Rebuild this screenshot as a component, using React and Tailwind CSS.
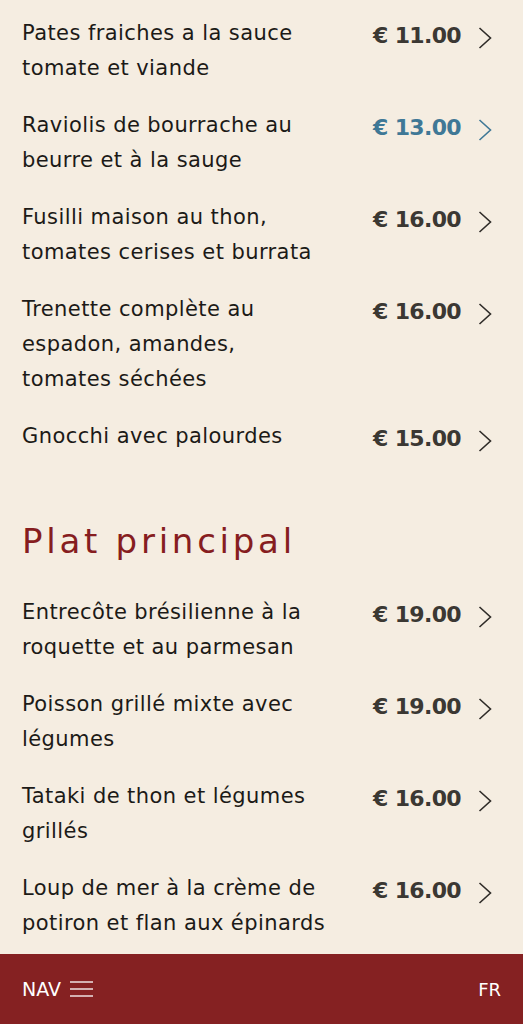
const pasta = [
  { lines: ['Pates fraiches a la sauce', 'tomate et viande'], price: '11.00' },
  { lines: ['Raviolis de bourrache au', 'beurre et à la sauge'], price: '13.00', active: true },
  { lines: ['Fusilli maison au thon,', 'tomates cerises et burrata'], price: '16.00' },
  { lines: ['Trenette complète au', 'espadon, amandes,', 'tomates séchées'], price: '16.00' },
  { lines: ['Gnocchi avec palourdes'], price: '15.00' },
];

const mains = [
  { lines: ['Entrecôte brésilienne à la', 'roquette et au parmesan'], price: '19.00' },
  { lines: ['Poisson grillé mixte avec', 'légumes'], price: '19.00' },
  { lines: ['Tataki de thon et légumes', 'grillés'], price: '16.00' },
  { lines: ['Loup de mer à la crème de', 'potiron et flan aux épinards'], price: '16.00' },
];

const Chevron = ({ className }) => (
  <svg className={className} width="14" height="22" viewBox="0 0 14 22" fill="none" stroke="currentColor" strokeWidth="1.6">
    <polyline points="1.5,1 12.5,11 1.5,21" />
  </svg>
);

const MenuItem = ({ lines, price, active }) => (
  <div className="flex items-start py-[11px]">
    <p className="flex-1 text-[21px] leading-[35px] tracking-[0.02em] text-[#1c1a17]">
      {lines.map((l, i) => (
        <span key={i} className="block whitespace-nowrap">{l}</span>
      ))}
    </p>
    <span className={`mt-[2px] whitespace-nowrap text-[22px] leading-[35px] font-bold tracking-[-0.03em] ${active ? 'text-[#3f7896]' : 'text-[#3b3833]'}`}>
      € {price}
    </span>
    <Chevron className={`ml-[17px] mt-[11px] shrink-0 ${active ? 'text-[#3f7896]' : 'text-[#2f2c28]'}`} />
  </div>
);

export default function App() {
  return (
    <div className="relative min-h-[1024px] bg-[#f5ede1] font-['DejaVu_Sans',sans-serif]">
      <div className="pl-[22px] pr-[31px] pb-[90px]">
        <div className="pt-[5px]">
          {pasta.map((item, i) => <MenuItem key={i} {...item} />)}
        </div>
        <h2 className="mt-[52px] mb-[21px] text-[34px] leading-[44px] tracking-[0.11em] text-[#861d20]">
          Plat principal
        </h2>
        <div>
          {mains.map((item, i) => <MenuItem key={i} {...item} />)}
        </div>
      </div>
      <nav className="fixed bottom-0 left-0 right-0 flex h-[70px] items-center justify-between bg-[#852122] px-[22px] text-white">
        <button className="flex items-center gap-[9px] text-[19px]">
          NAV
          <svg width="23" height="18" viewBox="0 0 23 18" fill="none" stroke="currentColor" strokeWidth="1.3">
            <line x1="0" y1="2" x2="23" y2="2" />
            <line x1="0" y1="9" x2="23" y2="9" />
            <line x1="0" y1="16" x2="23" y2="16" />
          </svg>
        </button>
        <span className="text-[18px]">FR</span>
      </nav>
    </div>
  );
}
